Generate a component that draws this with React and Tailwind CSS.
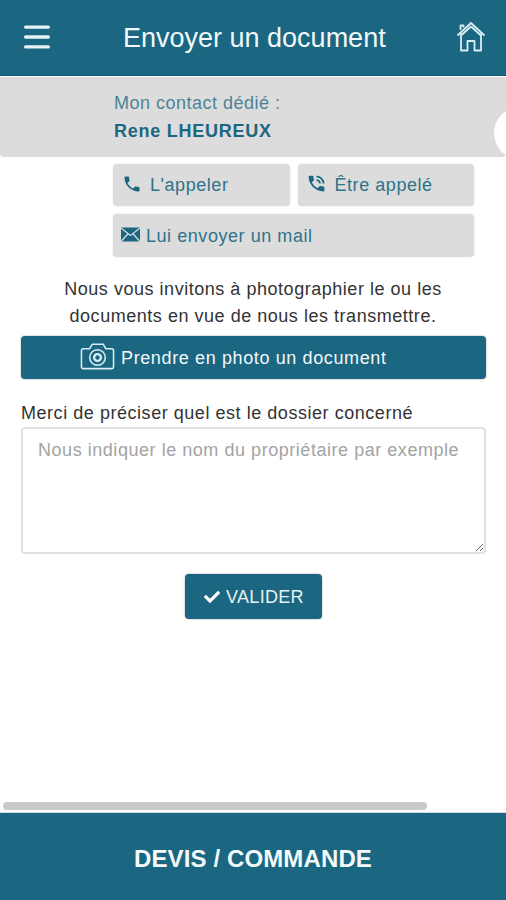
import React from "react";
import { Menu } from "lucide-react";
import { MdPhone, MdPhoneInTalk } from "react-icons/md";
import { FaCheck } from "react-icons/fa";

const HomeIcon = () => (
  <svg width="30" height="31" viewBox="0 0 30 31" fill="none" stroke="#d8eef4" strokeWidth="1.8" strokeLinejoin="round">
    <path d="M1.5 14.5 L15 2 L28.5 14.5" />
    <path d="M4.5 9 V4.5 H7.5 V6.5" />
    <path d="M5 12.5 V29.5 H11.5 V20 H18.5 V29.5 H25 V12.5" />
    <path d="M15 5.5 L5 14.5 M15 5.5 L25 14.5" />
  </svg>
);

const CameraIcon = () => (
  <svg width="35" height="28" viewBox="0 0 36 28" fill="none" stroke="#d8eef4" strokeWidth="1.6" strokeLinejoin="round">
    <path d="M3.5 6.5 H10 L12.5 2 H24 L26.5 6.5 H32.5 Q34.5 6.5 34.5 8.5 V25 Q34.5 27 32.5 27 H3.5 Q1.5 27 1.5 25 V8.5 Q1.5 6.5 3.5 6.5 Z" />
    <circle cx="18" cy="15.5" r="8" />
    <circle cx="18" cy="15.5" r="3.5" strokeWidth="2.4" />
  </svg>
);

const MailIcon = () => (
  <svg width="19" height="15" viewBox="0 0 19 15">
    <rect x="0" y="0.5" width="19" height="14" fill="#1b6680" />
    <path d="M0 1 L9.5 8.5 L19 1 M0 14.5 L7 6.8 M19 14.5 L12 6.8" fill="none" stroke="#dcdcdc" strokeWidth="1.3" />
  </svg>
);

const ContactButton = ({ icon, label, className }) => (
  <button className={`flex items-center rounded bg-[#dcdcdc] text-[18px] tracking-[0.55px] text-[#2f7388] shadow-[0_0_2px_rgba(0,0,0,0.12)] ${className}`}>
    {icon}
    <span className="mt-[1px]">{label}</span>
  </button>
);

export default function App() {
  return (
    <div className="flex h-[900px] w-[506px] flex-col overflow-hidden bg-white font-['Liberation_Sans',Arial,sans-serif]">
      <header className="flex h-[76px] shrink-0 items-center border-b border-[#12536a] bg-[#1b6680] text-white">
        <Menu size={34} strokeWidth={2.4} className="ml-[20px] mb-[2px] text-[#e6f2f5]" />
        <h1 className="ml-[69px] mt-[2px] flex-1 text-[27px] text-[#f2f8fa]">Envoyer un document</h1>
        <div className="mr-[20px] mb-[2px]">
          <HomeIcon />
        </div>
      </header>

      <div className="relative mt-[1px] h-[80px] shrink-0 rounded-b bg-[#dcdcdc] pl-[114px] pt-[15px]">
        <p className="text-[18px] leading-[22px] tracking-[0.5px] text-[#4d8497]">Mon contact dédié :</p>
        <p className="mt-[6px] text-[18px] font-bold leading-[22px] tracking-[0.75px] text-[#1b6680]">Rene LHEUREUX</p>
        <div className="absolute left-[494px] top-[30px] h-[52px] w-[52px] rounded-full bg-white" />
      </div>

      <div className="ml-[113px] mr-[32px] mt-[7px] grid shrink-0 grid-cols-2 gap-x-[8px] gap-y-[8px]">
        <ContactButton
          className="h-[42px] pl-[9px]"
          icon={<MdPhone size={20} color="#1b6680" className="mr-[8px] mb-[3px]" />}
          label="L'appeler"
        />
        <ContactButton
          className="h-[42px] pl-[8px]"
          icon={<MdPhoneInTalk size={21} color="#1b6680" className="mr-[8px] mb-[3px]" />}
          label="Être appelé"
        />
        <ContactButton
          className="col-span-2 h-[43px] pl-[8px]"
          icon={<span className="mr-[6px] mb-[3px]"><MailIcon /></span>}
          label="Lui envoyer un mail"
        />
      </div>

      <p className="mt-[19px] shrink-0 text-center text-[18px] leading-[27px] tracking-[0.53px] text-[#333333]">
        Nous vous invitons à photographier le ou les
        <br />
        documents en vue de nous les transmettre.
      </p>

      <button className="ml-[21px] mr-[20px] mt-[6px] flex h-[43px] shrink-0 items-center rounded bg-[#1b6680] pl-[59px] text-[18px] tracking-[0.62px] text-[#f2f8fa] shadow-[0_0_2px_rgba(0,0,0,0.4)]">
        <span className="mr-[6px] mb-[3px]">
          <CameraIcon />
        </span>
        <span className="mt-[1px]">Prendre en photo un document</span>
      </button>

      <label className="mx-[21px] mt-[23px] block shrink-0 text-[18px] leading-[22px] tracking-[0.54px] text-[#333333]">
        Merci de préciser quel est le dossier concerné
      </label>

      <textarea
        className="ml-[21px] mr-[20px] mt-[3px] h-[127px] shrink-0 rounded border-2 border-[#e2e2e2] px-[15px] py-[10px] text-[18px] leading-[22px] tracking-[0.54px] outline-none placeholder:text-[#a3a3a3]"
        placeholder="Nous indiquer le nom du propriétaire par exemple"
      />

      <button className="mx-auto mt-[20px] flex h-[45px] w-[137px] shrink-0 items-center justify-center gap-[6px] rounded bg-[#1b6680] pl-[2px] text-[18px] tracking-[0.3px] text-[#e6f2f5] shadow-[0_0_2px_rgba(0,0,0,0.4)]">
        <FaCheck size={16} className="text-white" />
        <span className="mt-[1px]">VALIDER</span>
      </button>

      <div className="flex-1" />

      <div className="mb-[2px] ml-[3px] h-[8px] w-[424px] shrink-0 rounded-full bg-[#c9c9c9]" />

      <footer className="flex h-[88px] shrink-0 items-center justify-center border-t border-[#cfdde2] bg-[#1b6680] pt-[5px] text-[24px] font-bold tracking-[0.12px] text-[#f4fafb]">
        DEVIS / COMMANDE
      </footer>
    </div>
  );
}
